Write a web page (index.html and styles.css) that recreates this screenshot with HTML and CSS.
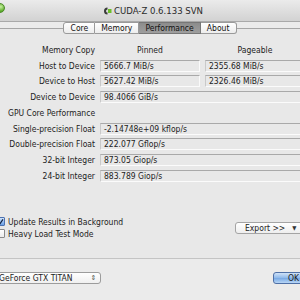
FILE: index.html
```html
<!DOCTYPE html>
<html>
<head>
<meta charset="utf-8">
<link rel="stylesheet" href="styles.css">
</head>
<body>
<div class="window">
  <div class="titlebar">
    <span class="zoombtn"></span>
    <div class="title">
      <svg class="appicon" width="9" height="8" viewBox="0 0 9 8"><path d="M4.5 0.5 A3.5 3.5 0 1 0 4.5 7.5 L4.5 5.5 A1.5 1.5 0 1 1 4.5 2.5 Z" fill="#3a3a3a"/><rect x="5" y="2" width="3.5" height="4" fill="#6cbf2a"/></svg>
      <span>CUDA-Z 0.6.133 SVN</span>
    </div>
  </div>
  <div class="tabbar">
    <div class="tabs">
      <span class="tab tab-first">Core</span>
      <span class="tab">Memory</span>
      <span class="tab tab-active">Performance</span>
      <span class="tab tab-last">About</span>
    </div>
  </div>
  <div class="pane">
    <div class="grid">
      <div class="lbl">Memory Copy</div>
      <div class="hdr">Pinned</div>
      <div class="hdr">Pageable</div>

      <div class="lbl">Host to Device</div>
      <div class="field">5666.7 MiB/s</div>
      <div class="field">2355.68 MiB/s</div>

      <div class="lbl">Device to Host</div>
      <div class="field">5627.42 MiB/s</div>
      <div class="field">2326.46 MiB/s</div>

      <div class="lbl">Device to Device</div>
      <div class="field span2">98.4066 GiB/s</div>

      <div class="section">GPU Core Performance</div>

      <div class="lbl">Single-precision Float</div>
      <div class="field span2">-2.14748e+09 kflop/s</div>

      <div class="lbl">Double-precision Float</div>
      <div class="field span2">222.077 Gflop/s</div>

      <div class="lbl">32-bit Integer</div>
      <div class="field span2">873.05 Giop/s</div>

      <div class="lbl">24-bit Integer</div>
      <div class="field span2">883.789 Giop/s</div>
    </div>
    <div class="options">
      <div class="checks">
        <label class="check"><span class="box box-on"><svg width="8" height="8" viewBox="0 0 8 8"><path d="M1.5 4 L3.3 6.2 L6.8 1" fill="none" stroke="#102040" stroke-width="1.4"/></svg></span>Update Results in Background</label>
        <label class="check"><span class="box"></span>Heavy Load Test Mode</label>
      </div>
      <div class="export"><span>Export &gt;&gt;</span><span class="tri">▼</span></div>
    </div>
  </div>
  <div class="footer">
    <div class="combo"><span>GeForce GTX TITAN</span><span class="updown">⇕</span></div>
    <div class="okbtn">OK</div>
  </div>
</div>
</body>
</html>
```

FILE: styles.css
```css
html, body {
  margin: 0;
  padding: 0;
}
body {
  width: 300px;
  height: 300px;
  overflow: hidden;
  background: #ebebeb;
  font-family: "DejaVu Sans Condensed", "DejaVu Sans", sans-serif;
  font-stretch: condensed;
  font-size: 8.5px;
  color: #1c1c1c;
}
.window {
  width: 300px;
  height: 300px;
  display: flex;
  flex-direction: column;
}
.titlebar {
  position: relative;
  height: 21px;
  background: linear-gradient(#ebebeb, #d2d2d2);
  border-bottom: 1px solid #a9a9a9;
  display: flex;
  align-items: center;
  justify-content: center;
  flex-shrink: 0;
}
.zoombtn {
  position: absolute;
  left: -5px;
  top: 3px;
  width: 8px;
  height: 8px;
  border-radius: 50%;
  background: radial-gradient(circle at 60% 35%, #c8f0a0, #5fae2e 60%, #3e8a1c);
  border: 1px solid #4c8a2a;
}
.title {
  display: flex;
  align-items: center;
  gap: 2px;
  font-size: 9.5px;
  color: #2a2a2a;
  margin-left: 6px;
}
.tabbar {
  display: flex;
  justify-content: center;
  margin-bottom: -6px;
  position: relative;
  z-index: 1;
  flex-shrink: 0;
}
.tabs {
  display: flex;
  height: 12px;
}
.tab {
  display: flex;
  align-items: center;
  justify-content: center;
  height: 10px;
  padding: 0 6px;
  background: linear-gradient(#ffffff, #ededed);
  border: 1px solid #9a9a9a;
  border-left: none;
  color: #111;
}
.tab-first {
  border-left: 1px solid #9a9a9a;
  border-radius: 3px 0 0 3px;
  padding-left: 7px;
}
.tab-last {
  border-radius: 0 3px 3px 0;
  padding-right: 7px;
}
.tab-active {
  background: linear-gradient(#8c8c8c, #9e9e9e);
  border-color: #777;
  color: #111;
}
.pane {
  margin: 0 -10px;
  padding: 13px 10px 0;
  border-top: 1px solid #a6a6a6;
  border-bottom: 1px solid #c4c4c4;
  background: #e8e8e8;
  height: 216px;
  flex-shrink: 0;
}
.grid {
  display: grid;
  grid-template-columns: 95px 100px 100px;
  column-gap: 5px;
  grid-auto-rows: 15.75px;
  align-items: center;
  width: 310px;
}
.lbl {
  text-align: right;
  white-space: nowrap;
}
.hdr {
  text-align: center;
}
.section {
  grid-column: 1 / 4;
  padding-left: 8px;
}
.field {
  height: 10px;
  line-height: 10px;
  padding-left: 3px;
  border-top: 1px solid #a9a9a9;
  border-left: 1px solid #c9c9c9;
  border-right: 1px solid #fafafa;
  border-bottom: 1px solid #fbfbfb;
  background: #e8e8e8;
  white-space: nowrap;
}
.span2 {
  grid-column: 2 / 4;
}
.options {
  display: flex;
  align-items: center;
  justify-content: space-between;
  margin-top: 32px;
  margin-left: -4px;
}
.checks {
  display: flex;
  flex-direction: column;
}
.check {
  display: flex;
  align-items: center;
  gap: 3px;
  height: 12px;
}
.box {
  width: 7px;
  height: 7px;
  border: 1px solid #8a8a8a;
  border-radius: 1px;
  background: linear-gradient(#fff, #ececec);
  display: flex;
  align-items: center;
  justify-content: center;
}
.box-on {
  background: linear-gradient(#cfe3fb, #6aa0e6);
  border-color: #4d72b0;
}
.export {
  display: flex;
  align-items: center;
  gap: 7px;
  width: 60px;
  height: 10px;
  padding-left: 9px;
  margin-right: -6px;
  border: 1px solid #a4a4a4;
  border-radius: 3px;
  background: linear-gradient(#ffffff, #eeeeee);
}
.tri {
  font-size: 6px;
  color: #333;
}
.footer {
  display: flex;
  justify-content: space-between;
  align-items: center;
  margin-top: 13px;
}
.combo {
  display: flex;
  align-items: center;
  justify-content: space-between;
  width: 97px;
  height: 10px;
  margin-left: -12px;
  padding: 0 4px 0 10px;
  border: 1px solid #9c9c9c;
  border-radius: 3px;
  background: linear-gradient(#ffffff, #f0f0f0);
}
.updown {
  font-size: 7px;
  color: #444;
}
.okbtn {
  width: 40px;
  height: 10px;
  margin-right: -29px;
  padding-left: 14px;
  border: 1px solid #4f70a6;
  border-radius: 3px;
  background: linear-gradient(#cfe2f8, #8db8ea 50%, #76a8e4 51%, #b8d6f6);
  line-height: 10px;
}
```
